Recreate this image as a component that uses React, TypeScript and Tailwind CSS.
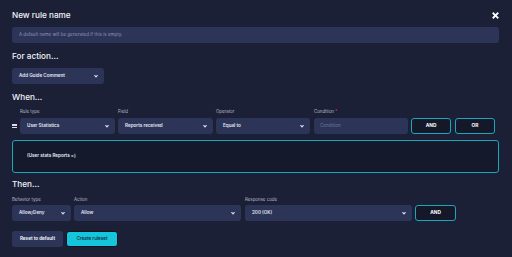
import React from "react";

// Small chevron used in the selects
function Caret() {
  return (
    <svg width="4" height="3" viewBox="0 0 10 8" className="shrink-0">
      <path d="M1 1.5 L5 6 L9 1.5" fill="#e6e8f2" stroke="#e6e8f2" strokeWidth="2.4" strokeLinecap="round" strokeLinejoin="round" />
    </svg>
  );
}

function Select({ value, className = "" }: { value: string; className?: string }) {
  return (
    <div
      className={`flex items-center justify-between h-[16px] rounded-[3px] bg-[#2c3458] pl-[7px] pr-[6px] text-[4.6px] font-semibold text-[#e4e7f2] ${className}`}
    >
      <span>{value}</span>
      <Caret />
    </div>
  );
}

function Label({ children }: { children: React.ReactNode }) {
  return <div className="h-[8px] flex items-center text-[4.4px] text-[#b4b9cf]">{children}</div>;
}

function OutlineButton({ text, className = "" }: { text: string; className?: string }) {
  return (
    <button
      className={`h-[16px] rounded-[3px] border-[1.5px] border-[#1aa7ba] bg-[#141829] text-[4.8px] font-bold text-white ${className}`}
    >
      {text}
    </button>
  );
}

function Heading({ children }: { children: React.ReactNode }) {
  return <div className="h-[14px] flex items-center text-[8.2px] font-medium text-[#f2f3f8]">{children}</div>;
}

export default function App() {
  return (
    <div
      className="w-[512px] h-[257px] overflow-hidden bg-[#1c2036] px-[12px] pt-[8px]"
      style={{ fontFamily: "Inter, 'Noto Sans', sans-serif" }}
    >
      {/* Header */}
      <div className="flex items-center justify-between pr-[1px]">
        <Heading>New rule name</Heading>
        <svg width="7" height="7" viewBox="0 0 10 10" className="mt-[1px]">
          <path d="M2 2 L8 8 M8 2 L2 8" stroke="#ffffff" strokeWidth="2.6" strokeLinecap="square" />
        </svg>
      </div>

      {/* Name input */}
      <div className="mt-[5px] h-[16px] w-[487px] rounded-[3px] bg-[#2c3458] pl-[7px] flex items-center text-[4.5px] text-[#8e97b8]">
        A default name will be generated if this is empty.
      </div>

      {/* For action */}
      <div className="mt-[6px]">
        <Heading>For action...</Heading>
      </div>
      <Select value="Add Guide Comment" className="mt-[5px] w-[92px]" />

      {/* When */}
      <div className="mt-[6px]">
        <Heading>When...</Heading>
      </div>
      <div className="mt-[4px] flex items-end">
        <div className="w-[8px] h-[16px] flex flex-col justify-center gap-[1px]">
          <div className="w-[5px] h-[1.5px] bg-[#d8dbe8]" />
          <div className="w-[5px] h-[1.5px] bg-[#d8dbe8]" />
        </div>
        <div className="w-[95px]">
          <Label>Rule type</Label>
          <Select value="User Statistics" className="mt-[2px]" />
        </div>
        <div className="w-[95px] ml-[3px]">
          <Label>Field</Label>
          <Select value="Reports received" className="mt-[2px]" />
        </div>
        <div className="w-[94px] ml-[3px]">
          <Label>Operator</Label>
          <Select value="Equal to" className="mt-[2px]" />
        </div>
        <div className="w-[94px] ml-[4px]">
          <Label>
            Condition<span className="ml-[1px] text-[#e0455a]">*</span>
          </Label>
          <div className="mt-[2px] h-[16px] rounded-[3px] bg-[#2c3458] pl-[6px] flex items-center text-[4.6px] text-[#6e7698]">
            Condition
          </div>
        </div>
        <OutlineButton text="AND" className="w-[40px] ml-[3px]" />
        <OutlineButton text="OR" className="w-[40px] ml-[4px]" />
      </div>

      {/* Expression preview */}
      <div className="mt-[6px] h-[33px] w-[487px] rounded-[3px] border-[1.5px] border-[#1aa7ba] bg-[#141a2c] pl-[14px] flex items-center text-[4.6px] font-semibold text-[#e8eaf3]">
        (User stats Reports =)
      </div>

      {/* Then */}
      <div className="mt-[4px]">
        <Heading>Then...</Heading>
      </div>
      <div className="mt-[5px] flex items-end">
        <div className="w-[59px]">
          <Label>Behavior type</Label>
          <Select value="Allow/Deny" className="mt-[1px]" />
        </div>
        <div className="w-[167px] ml-[3px]">
          <Label>Action</Label>
          <Select value="Allow" className="mt-[1px]" />
        </div>
        <div className="w-[167px] ml-[4px]">
          <Label>Response code</Label>
          <Select value="200 (OK)" className="mt-[1px]" />
        </div>
        <OutlineButton text="AND" className="w-[41px] ml-[3px]" />
      </div>

      {/* Footer buttons */}
      <div className="mt-[10px] flex gap-[3px]">
        <button className="h-[16px] w-[51px] rounded-[3px] bg-[#2c3458] text-[4.6px] font-bold text-[#eef0f7]">
          Reset to default
        </button>
        <button className="h-[16px] w-[52px] rounded-[3px] border border-[#0b1020] bg-[#14c5db] text-[4.6px] font-medium text-[#0f2030]">
          Create ruleset
        </button>
      </div>
    </div>
  );
}
